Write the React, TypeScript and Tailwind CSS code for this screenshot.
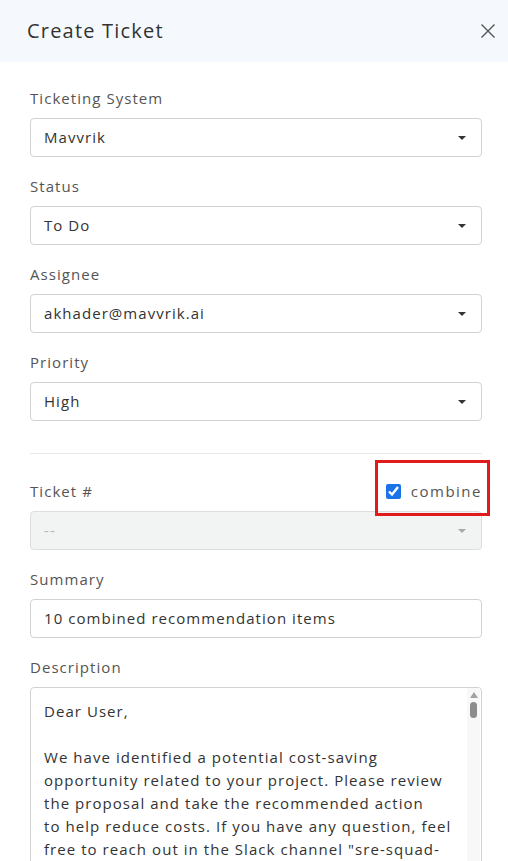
import React, { useState } from 'react';

const font = { fontFamily: '"Open Sans", "Noto Sans", sans-serif' };

const Caret = ({ muted }: { muted?: boolean }) => (
    <svg width="8" height="4" viewBox="0 0 8 4" className="shrink-0">
        <path d="M0 0 L8 0 L4 4 Z" fill={muted ? '#a8a8a8' : '#333'} />
    </svg>
);

const SelectBox = ({ value, disabled }: { value: string; disabled?: boolean }) => (
    <div
        className={
            'flex items-center justify-between h-[39px] pl-[13px] pr-[15px] rounded-[4px] border ' +
            (disabled ? 'bg-[#f2f3f3] border-[#dcdfe0] text-[#b5b5b5]' : 'bg-white border-[#cfd3d6] text-[#333]')
        }
    >
        <span className="text-[15px] tracking-[0.07em]">{value}</span>
        <Caret muted={disabled} />
    </div>
);

const Label = ({ children }: { children: React.ReactNode }) => (
    <div className="text-[15px] leading-[22px] tracking-[0.07em] text-[#555] mb-[9px]">{children}</div>
);

export default function App() {
    const [combine, setCombine] = useState(true);

    return (
        <div className="w-[508px] h-[861px] overflow-hidden bg-white relative" style={font}>
            {/* header */}
            <div className="h-[62px] bg-[#f5f9fd] flex items-center justify-between pl-[27px] pr-[12px]">
                <h1 className="text-[20px] tracking-[0.06em] text-[#333]">Create Ticket</h1>
                <svg width="16" height="16" viewBox="0 0 16 16">
                    <path d="M1.5 1.5 L14.5 14.5 M14.5 1.5 L1.5 14.5" stroke="#555" strokeWidth="1.4" />
                </svg>
            </div>

            <div className="pl-[30px] pr-[26px] pt-[25px]">
                <div className="flex flex-col gap-[18px]">
                    <div>
                        <Label>Ticketing System</Label>
                        <SelectBox value="Mavvrik" />
                    </div>
                    <div>
                        <Label>Status</Label>
                        <SelectBox value="To Do" />
                    </div>
                    <div>
                        <Label>Assignee</Label>
                        <SelectBox value="akhader@mavvrik.ai" />
                    </div>
                    <div>
                        <Label>Priority</Label>
                        <SelectBox value="High" />
                    </div>
                </div>

                <div className="mt-[32px] border-t border-[#e6e8ea]" />

                <div className="mt-[26px]">
                    <div className="flex items-center justify-between mb-[9px] h-[22px]">
                        <span className="text-[15px] tracking-[0.07em] text-[#555]">Ticket #</span>
                        <label className="flex items-center gap-[10px] text-[15px] tracking-[0.1em] text-[#555]">
                            <input
                                type="checkbox"
                                checked={combine}
                                onChange={() => setCombine(!combine)}
                                className="w-[15px] h-[15px] accent-[#1a73e8]"
                            />
                            combine
                        </label>
                    </div>
                    <SelectBox value="--" disabled />
                </div>

                <div className="mt-[18px]">
                    <Label>Summary</Label>
                    <div className="flex items-center h-[39px] pl-[13px] rounded-[4px] border border-[#cfd3d6] text-[15px] tracking-[0.07em] text-[#333]">
                        10 combined recommendation items
                    </div>
                </div>

                <div className="mt-[18px]">
                    <Label>Description</Label>
                    <div className="flex h-[200px] rounded-[4px] border border-[#cfd3d6]">
                        <div className="flex-1 pl-[13px] pt-[12px] text-[15px] leading-[23px] tracking-[0.07em] text-[#333] whitespace-nowrap overflow-hidden">
                            <div>Dear User,</div>
                            <div>&nbsp;</div>
                            <div>We have identified a potential cost-saving</div>
                            <div>opportunity related to your project. Please review</div>
                            <div>the proposal and take the recommended action</div>
                            <div>to help reduce costs. If you have any question, feel</div>
                            <div>free to reach out in the Slack channel "sre-squad-</div>
                        </div>
                        <div className="w-[13px] mr-[1px] bg-[#f8f8f8] flex flex-col items-center pt-[4px] gap-[4px]">
                            <svg width="8" height="6" viewBox="0 0 8 6">
                                <path d="M0 6 L8 6 L4 0 Z" fill="#a3a3a3" />
                            </svg>
                            <div className="w-[7px] h-[16px] rounded-full bg-[#8c8c8c]" />
                        </div>
                    </div>
                </div>
            </div>

            {/* annotation highlight */}
            <div className="absolute left-[375px] top-[460px] w-[115px] h-[56px] border-[3px] border-[#e01b1b] pointer-events-none" />
        </div>
    );
}
